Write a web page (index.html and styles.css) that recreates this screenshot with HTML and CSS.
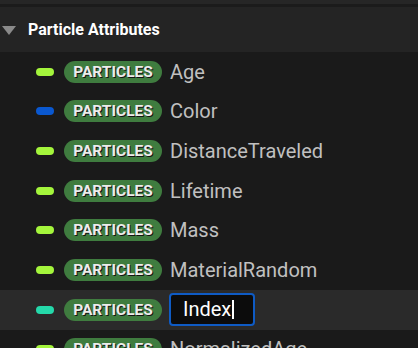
FILE: index.html
```html
<!DOCTYPE html>
<html lang="en">
<head>
    <meta charset="UTF-8">
    <title>Particle Attributes</title>
    <link rel="stylesheet" href="styles.css">
</head>
<body>
    <div class="top-strip"></div>
    <div class="top-divider"></div>

    <!-- Category header -->
    <div class="category-header">
        <span class="expander"></span>
        <span class="category-title">Particle Attributes</span>
    </div>

    <!-- Attribute rows -->
    <div class="attribute-list">
        <div class="attribute-row">
            <span class="type-pin pin-float"></span>
            <span class="namespace-badge">PARTICLES</span>
            <span class="attribute-name">Age</span>
        </div>
        <div class="attribute-row">
            <span class="type-pin pin-color"></span>
            <span class="namespace-badge">PARTICLES</span>
            <span class="attribute-name">Color</span>
        </div>
        <div class="attribute-row">
            <span class="type-pin pin-float"></span>
            <span class="namespace-badge">PARTICLES</span>
            <span class="attribute-name">DistanceTraveled</span>
        </div>
        <div class="attribute-row">
            <span class="type-pin pin-float"></span>
            <span class="namespace-badge">PARTICLES</span>
            <span class="attribute-name">Lifetime</span>
        </div>
        <div class="attribute-row">
            <span class="type-pin pin-float"></span>
            <span class="namespace-badge">PARTICLES</span>
            <span class="attribute-name">Mass</span>
        </div>
        <div class="attribute-row">
            <span class="type-pin pin-float"></span>
            <span class="namespace-badge">PARTICLES</span>
            <span class="attribute-name">MaterialRandom</span>
        </div>
        <div class="attribute-row selected">
            <span class="type-pin pin-int"></span>
            <span class="namespace-badge">PARTICLES</span>
            <div class="rename-box"><span class="rename-text">Index</span></div>
        </div>
        <div class="attribute-row">
            <span class="type-pin pin-float"></span>
            <span class="namespace-badge">PARTICLES</span>
            <span class="attribute-name">NormalizedAge</span>
        </div>
    </div>
</body>
</html>
```

FILE: styles.css
```css
/* General Styles */
body {
    margin: 0;
    width: 418px;
    height: 348px;
    overflow: hidden;
    background-color: #1a1a1a;
    font-family: Roboto, "Liberation Sans", sans-serif;
}

.top-strip {
    height: 4px;
    background-color: #262626;
}

.top-divider {
    height: 3px;
    background-color: #1b1b1b;
}

/* Category header */
.category-header {
    height: 45px;
    display: flex;
    align-items: center;
    background-color: #242424;
}

.expander {
    width: 0;
    height: 0;
    margin-left: 2px;
    margin-right: 12px;
    margin-top: 2px;
    border-left: 7px solid transparent;
    border-right: 7px solid transparent;
    border-top: 9px solid #8a8a8a;
}

.category-title {
    color: #ffffff;
    font-size: 16px;
    font-weight: bold;
}

/* Attribute rows */
.attribute-row {
    height: 39.67px;
    display: flex;
    align-items: center;
    padding-left: 36px;
}

.attribute-row.selected {
    background-color: #2a2a2a;
}

.type-pin {
    width: 18px;
    height: 8px;
    border-radius: 4px;
    margin-right: 10px;
}

.pin-float {
    background-color: #a4f53c;
}

.pin-color {
    background-color: #0a58d0;
}

.pin-int {
    background-color: #25d9aa;
}

.namespace-badge {
    width: 98px;
    height: 22px;
    line-height: 22px;
    box-sizing: border-box;
    border-radius: 11px;
    background-color: #3f7c3f;
    color: #ececec;
    font-size: 15.5px;
    font-weight: bold;
    text-align: center;
    text-shadow: 1px 1px 0 #141414;
    margin-right: 8px;
}

.attribute-name {
    color: #c0c0c0;
    font-size: 20px;
}

/* Inline rename box */
.rename-box {
    width: 86px;
    height: 33px;
    box-sizing: border-box;
    margin-left: -1px;
    padding-left: 12px;
    display: flex;
    align-items: center;
    border: 2px solid #0f5bc4;
    border-radius: 4px;
    background-color: #0c0c0c;
}

.rename-text {
    color: #ffffff;
    font-size: 20px;
    padding-right: 1px;
    border-right: 2px solid #ffffff;
    line-height: 19px;
}
```
